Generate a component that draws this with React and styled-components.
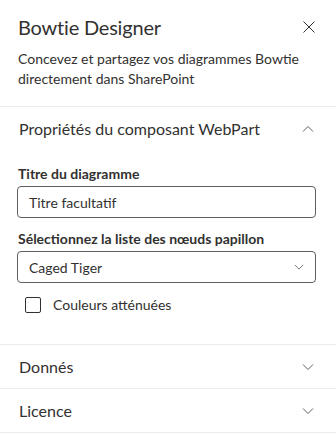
import React from 'react';
import styled, { createGlobalStyle } from 'styled-components';

const GlobalStyle = createGlobalStyle`
  html, body {
    margin: 0;
    padding: 0;
    background: #ffffff;
  }
  body {
    font-family: "Segoe UI", Lato, "Liberation Sans", sans-serif;
    color: #323130;
    -webkit-font-smoothing: antialiased;
  }
`;

const Pane = styled.div`
  width: 336px;
  height: 440px;
  overflow: hidden;
  background: #ffffff;
`;

const Header = styled.div`
  padding: 12px 18px 17px 18px;
`;

const TitleRow = styled.div`
  display: flex;
  align-items: center;
  justify-content: space-between;
`;

const Title = styled.h1`
  margin: 0;
  font-size: 20px;
  line-height: 30px;
  font-weight: 400;
  letter-spacing: -0.2px;
  color: #323130;
`;

const CloseButton = styled.button`
  border: none;
  background: transparent;
  padding: 0;
  width: 24px;
  height: 24px;
  margin-right: -3px;
  display: flex;
  align-items: center;
  justify-content: center;
  color: #323130;
  cursor: pointer;
`;

const Description = styled.p`
  margin: 7px 0 0 0;
  font-size: 14px;
  line-height: 20px;
  color: #323130;
`;

const Section = styled.div`
  border-top: 1px solid #edebe9;
`;

const SectionHeader = styled.div`
  height: 43px;
  padding: 0 19px;
  display: flex;
  align-items: center;
  justify-content: space-between;
  font-size: 16px;
  color: #323130;
  cursor: pointer;
`;

const Chevron = styled.svg`
  width: 12px;
  height: 12px;
  margin-right: 3px;
  color: #605e5c;
`;

const SectionBody = styled.div`
  padding: 14px 20px 29px 17px;
`;

const Field = styled.div`
  display: flex;
  flex-direction: column;
  gap: 2px;
  margin-bottom: ${(p) => p.$gap || 0}px;
`;

const Label = styled.label`
  font-size: 14px;
  line-height: 20px;
  font-weight: 700;
  color: #323130;
  padding-left: 1px;
`;

const Box = styled.div`
  box-sizing: border-box;
  height: 32px;
  border: 1px solid #605e5c;
  border-radius: 4px;
  padding: 0 8px 0 11px;
  display: flex;
  align-items: center;
  justify-content: space-between;
  font-size: 14px;
  color: #323130;
`;

const CheckRow = styled.label`
  display: flex;
  align-items: center;
  gap: 12px;
  margin-top: 12px;
  padding-left: 8px;
  font-size: 14px;
  line-height: 20px;
`;

const CheckBox = styled.span`
  box-sizing: border-box;
  width: 16px;
  height: 16px;
  border: 1px solid #323130;
  border-radius: 2px;
`;

const ChevronIcon = ({ up, size = 12 }) => (
  <Chevron viewBox="0 0 12 12" style={{ width: size, height: size }}>
    <path
      d={up ? 'M1 8.5 L6 3.5 L11 8.5' : 'M1 3.5 L6 8.5 L11 3.5'}
      fill="none"
      stroke="currentColor"
      strokeWidth="1"
    />
  </Chevron>
);

const App = () => (
  <Pane>
    <GlobalStyle />
    <Header>
      <TitleRow>
        <Title>Bowtie Designer</Title>
        <CloseButton aria-label="Fermer">
          <svg width="12" height="12" viewBox="0 0 12 12">
            <path d="M0.5 0.5 L11.5 11.5 M11.5 0.5 L0.5 11.5" stroke="currentColor" strokeWidth="1" />
          </svg>
        </CloseButton>
      </TitleRow>
      <Description>
        Concevez et partagez vos diagrammes Bowtie directement dans SharePoint
      </Description>
    </Header>

    <Section>
      <SectionHeader>
        Propriétés du composant WebPart
        <ChevronIcon up />
      </SectionHeader>
      <SectionBody>
        <Field $gap={11}>
          <Label>Titre du diagramme</Label>
          <Box>Titre facultatif</Box>
        </Field>
        <Field>
          <Label>Sélectionnez la liste des nœuds papillon</Label>
          <Box>
            Caged Tiger
            <ChevronIcon size={10} />
          </Box>
        </Field>
        <CheckRow>
          <CheckBox />
          Couleurs atténuées
        </CheckRow>
      </SectionBody>
    </Section>

    <Section>
      <SectionHeader>
        Donnés
        <ChevronIcon />
      </SectionHeader>
    </Section>
    <Section>
      <SectionHeader>
        Licence
        <ChevronIcon />
      </SectionHeader>
    </Section>
    <Section />
  </Pane>
);

export default App;
